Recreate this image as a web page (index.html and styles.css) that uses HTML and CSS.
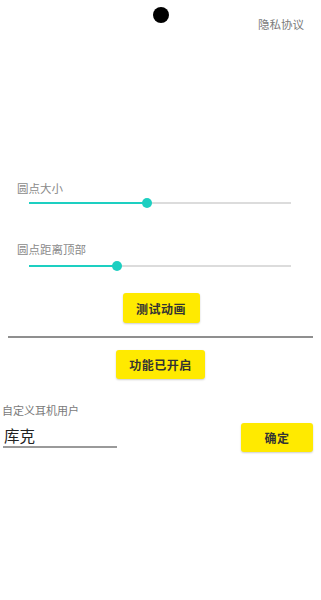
FILE: index.html
```html
<!DOCTYPE html>
<html lang="zh">
<head>
    <meta charset="UTF-8">
    <meta name="viewport" content="width=device-width, initial-scale=1.0">
    <title>设置</title>
    <link rel="stylesheet" href="styles.css">
</head>
<body>
    <div class="page">
        <div class="header">
            <span></span>
            <div class="dot"></div>
            <a class="privacy">隐私协议</a>
        </div>

        <div class="setting first">
            <div class="label">圆点大小</div>
            <div class="slider">
                <div class="track"></div>
                <div class="fill" style="width: 118px"></div>
                <div class="thumb" style="left: 113px"></div>
            </div>
        </div>

        <div class="setting second">
            <div class="label">圆点距离顶部</div>
            <div class="slider">
                <div class="track"></div>
                <div class="fill" style="width: 88px"></div>
                <div class="thumb" style="left: 83px"></div>
            </div>
        </div>

        <div class="center">
            <button type="button" class="btn test">测试动画</button>
        </div>

        <hr class="divider">

        <div class="center">
            <button type="button" class="btn toggle">功能已开启</button>
        </div>

        <div class="custom">
            <div class="custom-label">自定义耳机用户</div>
            <div class="custom-row">
                <input type="text" class="name" value="库克">
                <button type="button" class="btn ok">确定</button>
            </div>
        </div>
    </div>
</body>
</html>
```

FILE: styles.css
```css
*{
    margin: 0;
    padding: 0;
    box-sizing: border-box;
}
body{
    background-color: #fff;
    font-family: "Noto Sans CJK SC", "Noto Sans", sans-serif;
    color: #333;
}
.page{
    width: 321px;
    height: 600px;
}
.header{
    display: grid;
    grid-template-columns: 1fr 16px 1fr;
    height: 40px;
}
.dot{
    width: 16px;
    height: 16px;
    margin-top: 7px;
    border-radius: 50%;
    background-color: #000;
}
.privacy{
    justify-self: end;
    margin-top: 16px;
    margin-right: 17px;
    font-size: 11.5px;
    line-height: 16px;
    color: #7a7a7a;
}
.setting{
    padding-left: 17px;
}
.setting.first{
    margin-top: 141px;
}
.setting.second{
    margin-top: 34px;
}
.label{
    font-size: 11.5px;
    line-height: 15px;
    color: #8a8a8a;
}
.slider{
    position: relative;
    width: 262px;
    height: 10px;
    margin-left: 12px;
    margin-top: 2px;
}
.setting.second .slider{
    margin-top: 4px;
}
.slider .track{
    position: absolute;
    left: 0;
    right: 0;
    top: 4px;
    height: 2px;
    background-color: #dcdcdc;
}
.slider .fill{
    position: absolute;
    left: 0;
    top: 4px;
    height: 2px;
    background-color: #1dcfc1;
}
.slider .thumb{
    position: absolute;
    top: 0;
    width: 10px;
    height: 10px;
    border-radius: 50%;
    background-color: #1dcfc1;
}
.center{
    display: flex;
    justify-content: center;
}
.btn{
    height: 30px;
    border: none;
    border-radius: 3px;
    background-color: #ffea00;
    box-shadow: 0 1px 2px rgba(0,0,0,0.2);
    font-family: inherit;
    font-size: 12px;
    font-weight: bold;
    letter-spacing: 0.5px;
    color: #333;
}
.btn.test{
    width: 77px;
    margin-top: 22px;
    margin-left: 1px;
}
.divider{
    margin: 13px 8px 0 8px;
    border: none;
    height: 2px;
    background-color: #8f8f8f;
}
.btn.toggle{
    width: 89px;
    height: 29px;
    margin-top: 12px;
}
.custom{
    margin-top: 24px;
}
.custom-label{
    padding-left: 2px;
    font-size: 11px;
    line-height: 15px;
    color: #7a7a7a;
}
.custom-row{
    display: flex;
    justify-content: space-between;
    align-items: flex-start;
    margin-top: 3px;
    padding-right: 8px;
}
.name{
    width: 114px;
    height: 24px;
    margin-left: 3px;
    margin-top: 3px;
    padding: 0 0 0 1px;
    border: none;
    border-bottom: 2px solid #9a9a9a;
    outline: none;
    font-family: inherit;
    font-size: 15.5px;
    color: #222;
}
.btn.ok{
    width: 72px;
    height: 29px;
    margin-top: 2px;
}
```
